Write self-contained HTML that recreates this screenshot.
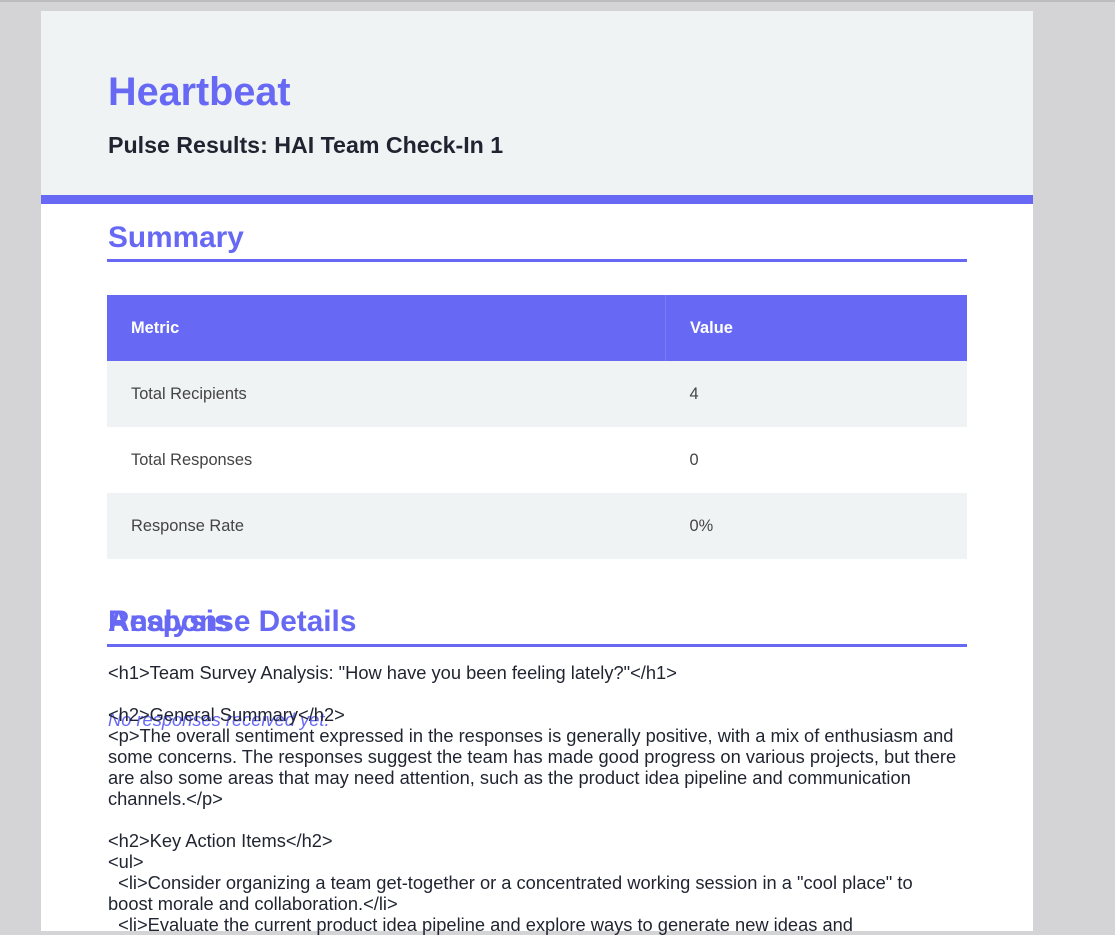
<!DOCTYPE html>
<html><head><meta charset="utf-8"><style>
body{margin:0;width:1115px;height:921px;overflow:hidden;background:#d4d4d6;font-family:"Liberation Sans",Arial,sans-serif;position:relative}
.top{position:absolute;left:0;top:0;width:1115px;height:2px;background:#bdbdbf}
.c{position:absolute;left:41px;top:11px;width:992px;height:920px;background:#fff}
.hd{position:absolute;left:0;top:0;width:992px;height:184px;background:#f0f3f4;border-bottom:9px solid #6769f4}
.a{position:absolute;white-space:nowrap}
.t1{left:67px;top:59px;font-size:39.6px;font-weight:bold;color:#6769f4}
.t2{left:67px;top:121px;font-size:23.2px;font-weight:bold;color:#1f2430}
.h{left:67px;font-size:29.8px;font-weight:bold;color:#6769f4}
.ln{position:absolute;left:66px;width:860px;height:3px;background:#6769f4}
table{position:absolute;left:66px;top:284px;width:860px;border-collapse:collapse;font-size:16.4px}
th,td{height:66px;padding:0 0 0 24px;text-align:left}
th{background:#6769f4;color:#fff;font-weight:bold}
th:first-child{border-right:1px solid #7b7df6}
td{color:#444}
tr.g td{background:#f0f3f4}
.raw{position:absolute;left:67px;top:651px;width:852px;font-size:18.3px;line-height:21px;color:#1f2430;white-space:pre-wrap}
.no{left:67px;top:698px;font-size:18.3px;font-style:italic;color:#6769f4}
</style></head><body>
<div class="top"></div>
<div class="c">
<div class="hd"></div>
<div class="a t1">Heartbeat</div>
<div class="a t2">Pulse Results: HAI Team Check-In 1</div>
<div class="a h" style="top:210px">Summary</div>
<div class="ln" style="top:248px"></div>
<table>
<tr><th style="width:534px">Metric</th><th>Value</th></tr>
<tr class="g"><td>Total Recipients</td><td>4</td></tr>
<tr><td>Total Responses</td><td>0</td></tr>
<tr class="g"><td>Response Rate</td><td>0%</td></tr>
</table>
<div class="a h" style="top:594px">Response Details</div>
<div class="a h" style="top:594px">Analysis</div>
<div class="ln" style="top:633px"></div>
<div class="a no">No responses received yet.</div>
<div class="raw">&lt;h1&gt;Team Survey Analysis: "How have you been feeling lately?"&lt;/h1&gt;

&lt;h2&gt;General Summary&lt;/h2&gt;
&lt;p&gt;The overall sentiment expressed in the responses is generally positive, with a mix of enthusiasm and some concerns. The responses suggest the team has made good progress on various projects, but there are also some areas that may need attention, such as the product idea pipeline and communication channels.&lt;/p&gt;

&lt;h2&gt;Key Action Items&lt;/h2&gt;
&lt;ul&gt;
  &lt;li&gt;Consider organizing a team get-together or a concentrated working session in a "cool place" to boost morale and collaboration.&lt;/li&gt;
  &lt;li&gt;Evaluate the current product idea pipeline and explore ways to generate new ideas and</div>
</div>
</body></html>
